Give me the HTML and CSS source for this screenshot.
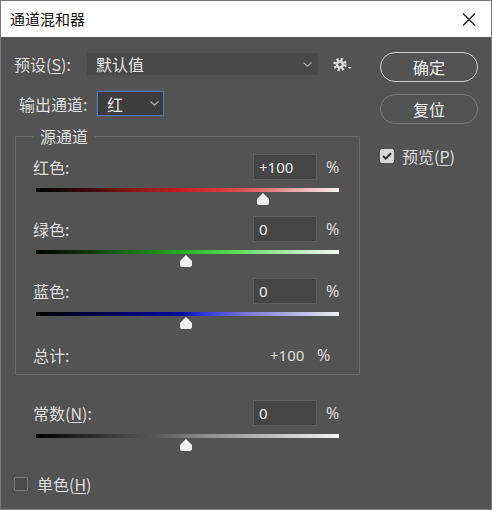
FILE: index.html
```html
<!DOCTYPE html>
<html lang="zh">
<head>
<meta charset="utf-8">
<title>通道混和器</title>
<link rel="stylesheet" href="styles.css">
</head>
<body>
<div class="window">
  <div class="titlebar">
    <span class="title">通道混和器</span>
    <svg class="close" width="14" height="13" viewBox="0 0 14 13"><path d="M1 0.5 L13 12.5 M13 0.5 L1 12.5" stroke="#111" stroke-width="1.1" fill="none"/></svg>
  </div>
  <div class="body">
    <div class="main">
      <div class="row preset">
        <span class="lbl preset-lbl">预设(<u>S</u>):</span>
        <div class="select preset-select">
          <span>默认值</span>
          <svg class="chev" width="9" height="5" viewBox="0 0 9 5"><path d="M0.5 0.5 L4.5 4.2 L8.5 0.5" stroke="#a8a8a8" stroke-width="1.2" fill="none"/></svg>
        </div>
        <svg class="gear" width="21" height="15" viewBox="0 0 21 15">
          <circle cx="7" cy="7.5" r="5.3" fill="none" stroke="#dcdcdc" stroke-width="2.8" stroke-dasharray="2.2 1.96"/>
          <circle cx="7" cy="7.5" r="4.2" fill="#dcdcdc"/>
          <circle cx="7" cy="7.5" r="1.7" fill="#535353"/>
          <path d="M15 10 L18.6 10 L16.8 12 Z" fill="#dcdcdc"/>
        </svg>
      </div>
      <div class="row output">
        <span class="lbl out-lbl">输出通道:</span>
        <div class="select out-select">
          <span>红</span>
          <svg class="chev" width="9" height="5" viewBox="0 0 9 5"><path d="M0.5 0.5 L4.5 4.2 L8.5 0.5" stroke="#b0b0b0" stroke-width="1.2" fill="none"/></svg>
        </div>
      </div>
      <fieldset class="group">
        <legend>源通道</legend>
        <div class="channel">
          <div class="ch-head"><span class="lbl">红色:</span><div class="num">+100</div><span class="pct">%</span></div>
          <div class="slider"><div class="track red"></div><svg class="thumb" style="left:75%" width="13" height="12" viewBox="0 0 13 12"><path d="M6.5 0 L12.5 6 L12.5 10 Q12.5 12 10.5 12 L2.5 12 Q0.5 12 0.5 10 L0.5 6 Z" fill="#f2f2f2"/></svg></div>
        </div>
        <div class="channel">
          <div class="ch-head"><span class="lbl">绿色:</span><div class="num">0</div><span class="pct">%</span></div>
          <div class="slider"><div class="track green"></div><svg class="thumb" style="left:49.5%" width="13" height="12" viewBox="0 0 13 12"><path d="M6.5 0 L12.5 6 L12.5 10 Q12.5 12 10.5 12 L2.5 12 Q0.5 12 0.5 10 L0.5 6 Z" fill="#f2f2f2"/></svg></div>
        </div>
        <div class="channel">
          <div class="ch-head"><span class="lbl">蓝色:</span><div class="num">0</div><span class="pct">%</span></div>
          <div class="slider"><div class="track blue"></div><svg class="thumb" style="left:49.5%" width="13" height="12" viewBox="0 0 13 12"><path d="M6.5 0 L12.5 6 L12.5 10 Q12.5 12 10.5 12 L2.5 12 Q0.5 12 0.5 10 L0.5 6 Z" fill="#f2f2f2"/></svg></div>
        </div>
        <div class="total">
          <span class="lbl total-lbl">总计:</span><span class="tval">+100</span><span class="pct tpct">%</span>
        </div>
      </fieldset>
      <div class="channel const">
        <div class="ch-head"><span class="lbl">常数(<u>N</u>):</span><div class="num">0</div><span class="pct">%</span></div>
        <div class="slider"><div class="track gray"></div><svg class="thumb" style="left:49.5%" width="13" height="12" viewBox="0 0 13 12"><path d="M6.5 0 L12.5 6 L12.5 10 Q12.5 12 10.5 12 L2.5 12 Q0.5 12 0.5 10 L0.5 6 Z" fill="#f2f2f2"/></svg></div>
      </div>
      <div class="check mono"><span class="cb"></span><span class="lbl">单色(<u>H</u>)</span></div>
    </div>
    <div class="side">
      <div class="btn primary">确定</div>
      <div class="btn">复位</div>
      <div class="check preview">
        <span class="cb checked"><svg width="10" height="8" viewBox="0 0 10 8"><path d="M1 4 L3.8 6.6 L9 1.2" stroke="#333" stroke-width="2" fill="none"/></svg></span>
        <span class="lbl">预览(<u>P</u>)</span>
      </div>
    </div>
  </div>
</div>
</body>
</html>
```
FILE: styles.css
```css
* { box-sizing: border-box; }
html, body { margin: 0; padding: 0; }
body {
  font-family: "Noto Sans", "Noto Sans CJK SC", sans-serif;
  font-size: 15px;
  background: #535353;
}
.window {
  width: 492px;
  height: 510px;
  border: 1px solid #7a7a7a;
  background: #535353;
  display: flex;
  flex-direction: column;
  overflow: hidden;
}
.titlebar {
  height: 36px;
  background: #ffffff;
  display: flex;
  align-items: center;
  padding: 0 15px 0 9px;
  flex: none;
}
.title {
  flex: 1;
  color: #111;
  font-family: "Noto Sans CJK SC", sans-serif;
  font-size: 15px;
  line-height: 20px;
}
.body {
  flex: 1;
  display: flex;
  padding: 15px 0 0 13px;
}
.main {
  width: 346px;
  padding-top: 1px;
  display: flex;
  flex-direction: column;
}
.lbl {
  color: #dedede;
  font-family: "Noto Sans CJK SC", sans-serif;
  font-size: 16px;
  line-height: 20px;
  white-space: nowrap;
}
u { text-decoration: underline; text-underline-offset: 2px; }
.row { display: flex; align-items: center; }
.preset { height: 22px; }
.preset-lbl { width: 73px; }
.select {
  display: flex;
  align-items: center;
  color: #e8e8e8;
  font-family: "Noto Sans CJK SC", sans-serif;
  font-size: 16px;
  line-height: 20px;
}
.select span { flex: 1; }
.preset-select {
  width: 231px;
  height: 22px;
  background: #494949;
  border: 1px solid #4b4b4b;
  padding: 0 5px 0 8px;
}
.gear { margin-left: 15px; }
.output { height: 25px; margin-top: 16px; }
.out-lbl { width: 78px; margin-left: 5px; }
.out-select {
  width: 67px;
  height: 25px;
  background: #3d3d3d;
  border: 1px solid #4b77ac;
  box-shadow: 0 0 0 1px rgba(75, 119, 172, 0.35);
  padding: 0 4px 0 9px;
}
.group {
  margin: 10px 0 0 1px;
  width: 345px;
  border: 1px solid #6b6b6b;
  padding: 8px 0 9px 0;
  min-width: 0;
}
.group legend {
  margin-left: 17px;
  padding: 0 7px;
  color: #dedede;
  font-family: "Noto Sans CJK SC", sans-serif;
  font-size: 16px;
  line-height: 20px;
}
.channel {
  padding-left: 17px;
  width: 344px;
}
.ch-head {
  display: flex;
  align-items: center;
  height: 26px;
}
.ch-head .lbl { width: 220px; }
.num {
  width: 64px;
  height: 26px;
  background: #454545;
  border: 1px solid #5f5f5f;
  color: #ececec;
  padding-left: 5px;
  line-height: 24px;
  font-size: 15px;
}
.pct {
  color: #dedede;
  margin-left: 9px;
  font-size: 16px;
  line-height: 20px;
}
.slider {
  position: relative;
  height: 36px;
  margin-left: 3px;
  width: 303px;
}
.track {
  position: relative;
  top: 8px;
  height: 4px;
}
.thumb {
  position: absolute;
  top: 13px;
  transform: translateX(-50%);
}
.red { background: linear-gradient(to right, #000 0%, #3c0a0c 18%, #8a1418 32%, #c81e26 48%, #d63a40 62%, #e26a6e 74%, #eeb4b6 88%, #f6f0f0 100%); }
.green { background: linear-gradient(to right, #000 0%, #0e3a0e 18%, #1a7a1a 34%, #28b428 50%, #4cd84c 62%, #8ae48a 76%, #c8f0c8 90%, #f2f8f2 100%); }
.blue { background: linear-gradient(to right, #000 0%, #00003e 18%, #00007e 34%, #0a0aa0 48%, #3838e0 56%, #7a7ad8 70%, #b6b6e4 86%, #f0f0f6 100%); }
.gray { background: linear-gradient(to right, #000 0%, #3a3a3a 25%, #5a5a5a 40%, #8a8a8a 55%, #c0c0c0 78%, #f4f4f4 100%); }
.total {
  display: flex;
  align-items: center;
  height: 20px;
  margin-top: 5px;
  padding-left: 17px;
}
.total-lbl { width: 237px; }
.tval { color: #dedede; font-size: 15px; line-height: 20px; width: 33px; }
.tpct { margin-left: 14px; }
.const { margin-top: 25px; padding-left: 19px; }
.check { display: flex; align-items: center; height: 20px; }
.cb {
  width: 14px;
  height: 14px;
  border-radius: 2px;
  border: 1px solid #7a7a7a;
  background: #4b4b4b;
  display: flex;
  align-items: center;
  justify-content: center;
}
.cb.checked { background: #d8d8d8; border-color: #d8d8d8; }
.mono { margin-top: 12px; }
.mono .lbl { margin-left: 9px; }
.side {
  margin-left: 20px;
  width: 98px;
  display: flex;
  flex-direction: column;
}
.btn {
  height: 30px;
  border-radius: 15px;
  border: 1px solid #7c7c7c;
  color: #f0f0f0;
  font-family: "Noto Sans CJK SC", sans-serif;
  font-size: 16px;
  display: flex;
  align-items: center;
  justify-content: center;
  margin-bottom: 12px;
}
.btn.primary { border: 1.5px solid #d0d0d0; }
.preview { margin-top: 10px; }
.preview .lbl { margin-left: 8px; }
```
